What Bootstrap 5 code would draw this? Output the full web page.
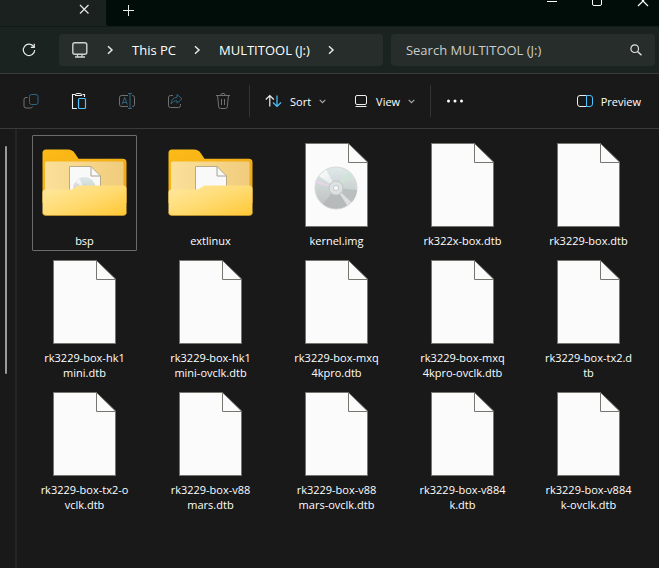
<!DOCTYPE html>
<html lang="en" data-bs-theme="dark">
<head>
<meta charset="utf-8">
<meta name="viewport" content="width=device-width, initial-scale=1">
<title>MULTITOOL (J:)</title>
<link href="https://cdn.jsdelivr.net/npm/bootstrap@5.3.0/dist/css/bootstrap.min.css" rel="stylesheet">
<style>
body { background: #191919; color: #fff; font-family: "Open Sans", "Noto Sans", sans-serif; font-size: 11px; line-height: 15px; }
svg { display: block; flex: none; }
.title-strip { background: #1a211e; height: 26px; }
.tab-current { width: 106px; padding-right: 13px; }
.strip-rest { background: #000d08; border-bottom-left-radius: 3px; }
.plain-btn { background: none; border: 0; color: inherit; padding: 0; display: flex; align-items: center; justify-content: center; }
.win-btn { width: 46px; }
.address-row { background: #1a231f; border-top: 1px solid #111a16; border-bottom: 1px solid #3a3b3a; padding: 7px 4px 7px 0; }
.refresh-btn { width: 59px; padding-right: 2px; }
.field-box { background: #262d2a; border-radius: 4px; height: 32px; font-size: 13px; }
.path-box { flex: 25 1 0; padding-left: 12px; }
.path-box a { color: #fff; }
.path-arrow { margin: 0 18px 0 17px; }
.find-box { flex: 19 1 0; padding: 0 12px 0 15px; }
.find-box input { background: none; border: 0; outline: 0; color: #fff; padding: 0; min-width: 0; }
.find-box input::placeholder { color: #c9cecb; opacity: 1; }
.command-bar { border-bottom: 1px solid #3a3a3a; height: 55px; padding: 0 18px 0 7px; }
.icon-btn { width: 48px; height: 32px; }
.icon-btn:disabled { opacity: .45; }
.rule { width: 1px; height: 32px; background: #333; margin-left: 2px; }
.menu-btn { padding: 0 13px 0 15px; height: 32px; }
.nav-edge { width: 17px; border-right: 2px solid #252525; padding: 17px 0 0 5px; }
.scroll-thumb { width: 2px; height: 228px; background: #9a9a9a; border-radius: 1px; }
.file-grid { display: grid; grid-template-columns: repeat(auto-fill, 105px); column-gap: 21px; row-gap: 1px; align-content: start; padding: 6px 0 16px 15px; }
.file-tile { border: 1px solid transparent; padding: 7px 0 2px; gap: 6px; white-space: nowrap; text-align: center; }
.file-tile.picked { border-color: #6b6b6b; border-radius: 1px; }
</style>
<script src="https://cdn.jsdelivr.net/npm/bootstrap@5.3.0/dist/js/bootstrap.bundle.min.js"></script>
</head>
<body class="d-flex flex-column min-vh-100">
<svg width="0" height="0" class="position-absolute" aria-hidden="true">
  <defs>
    <linearGradient id="gBack" x1="0" y1="0" x2="1" y2="1"><stop offset="0" stop-color="#fdbb16"/><stop offset="1" stop-color="#e9a51b"/></linearGradient>
    <linearGradient id="gInner" x1="0" y1="0" x2="1" y2="0"><stop offset="0" stop-color="#fbe09a"/><stop offset="1" stop-color="#f0cc7c"/></linearGradient>
    <linearGradient id="gFront" x1="0" y1="0" x2="1" y2="1"><stop offset="0" stop-color="#ffe8a0"/><stop offset=".5" stop-color="#ffdb72"/><stop offset="1" stop-color="#ffc734"/></linearGradient>
    <linearGradient id="gDisc" x1="0" y1="0" x2="0" y2="1"><stop offset="0" stop-color="#dfe9e9"/><stop offset=".5" stop-color="#ccd3d3"/><stop offset="1" stop-color="#bcbebe"/></linearGradient>
    <linearGradient id="gShine" x1="0" y1="0" x2="1" y2="1"><stop offset="0" stop-color="#fff" stop-opacity=".9"/><stop offset="1" stop-color="#fff" stop-opacity=".3"/></linearGradient>
  </defs>
  <symbol id="disc" viewBox="0 0 44 44">
    <circle cx="22" cy="22" r="21" fill="url(#gDisc)" stroke="#d5d8d8"/>
    <path d="M22 22 5 10 12 3.5z" fill="url(#gShine)"/>
    <path d="M22 22 1.500 14 0.800 17z" fill="#e6d6e8"/>
    <path d="M22 22 34.500 6 38 9.500z" fill="#cde5d6"/>
    <path d="M22 22 43 24A21 21 0 0 1 38 36z" fill="#bbbfbf"/>
    <path d="M22 22 37 36 33 39.500z" fill="#dedfdf"/>
    <path d="M22 22 9 38A21 21 0 0 0 33 39.500z" fill="#b7baba"/>
    <circle cx="22" cy="22" r="7" fill="#dde1e1" stroke="#c0c6c6"/>
    <circle cx="22" cy="22" r="2.500" fill="#fbfbfb" stroke="#c3c8c8"/>
  </symbol>
  <symbol id="file" viewBox="0 0 85 84">
    <path d="M11.500 .5H54.500L73.500 19V83.500H11.500z" fill="#fbfbfb" stroke="#77756f"/>
    <path d="M54.500 .5V19.500H73.500" fill="none" stroke="#77756f"/>
  </symbol>
  <symbol id="folderBack" viewBox="0 0 85 84">
    <path d="M.5 10a3.500 3.500 0 0 1 3.500-3.500H26c3 0 5 1 7 4l3.500 5.200H81a3.500 3.500 0 0 1 3.500 3.500V60H.5z" fill="url(#gBack)"/>
    <path d="M3 20a1.500 1.500 0 0 1 1.500-1.500h75.500a1.500 1.500 0 0 1 1.500 1.500V60H3z" fill="url(#gInner)"/>
    <path d="M27.500 23.500H49L58.500 33V60H27.500z" fill="#f9f9f9" stroke="#b9aa87"/>
    <path d="M49 23.500V33H58.500" fill="none" stroke="#a9a294"/>
  </symbol>
  <symbol id="folderFront" viewBox="0 0 85 84">
    <path d="M.5 49.500a3 3 0 0 1 3-3H27c3 0 4-.6 6-2s3.500-2 6-2H81a3.500 3.500 0 0 1 3.500 3.500V69a3.500 3.500 0 0 1-3.500 3.500H4A3.500 3.500 0 0 1 .5 69z" fill="url(#gFront)"/>
    <path d="M.5 69A3.500 3.500 0 0 0 4 72.500H81A3.500 3.500 0 0 0 84.500 69" fill="none" stroke="#c99a2b" stroke-opacity=".7"/>
  </symbol>
  <symbol id="chevR" viewBox="0 0 8 10"><path d="M2 1.200 6 5 2 8.800" fill="none" stroke="#e8e8e8" stroke-width="1.500"/></symbol>
  <symbol id="chevD" viewBox="0 0 7 5"><path d="M.7 .8 3.500 3.600 6.300 .8" fill="none" stroke="#aaa" stroke-width="1.200"/></symbol>
</svg>

<header>
  <div class="title-strip d-flex">
    <div class="tab-current d-flex justify-content-end">
      <button class="plain-btn pb-2" aria-label="Close tab"><svg width="18" height="18" viewBox="0 0 18 18"><path d="M5 5l8.500 8.500M13.500 5 5 13.500" stroke="#e8e8e8" stroke-width="1.200" fill="none"/></svg></button>
    </div>
    <div class="strip-rest flex-grow-1 d-flex justify-content-between">
      <button class="plain-btn win-btn pb-1" aria-label="New tab"><svg width="12" height="12" viewBox="0 0 12 12"><path d="M5.500 0v11M0 5.500h11" stroke="#e8e8e8" fill="none"/></svg></button>
      <div class="d-flex align-items-start">
        <button class="plain-btn win-btn" aria-label="Minimize"><svg width="12" height="8" viewBox="0 0 12 8"><path d="M1 1.500h10" stroke="#fff"/></svg></button>
        <button class="plain-btn win-btn" aria-label="Maximize"><svg width="12" height="8" viewBox="0 0 12 8"><path d="M.5 0v4a1.500 1.500 0 0 0 1.500 1.500h6A1.500 1.500 0 0 0 9.500 4V0" stroke="#fff" fill="none"/></svg></button>
        <button class="plain-btn ps-3 pe-2" aria-label="Close window"><svg width="14" height="8" viewBox="0 0 14 8"><path d="M1 6 7 0M11 6 5 0" stroke="#fff" stroke-width="1.200"/></svg></button>
      </div>
    </div>
  </div>

  <div class="address-row d-flex align-items-center">
    <button class="plain-btn refresh-btn" aria-label="Refresh"><svg width="14" height="14" viewBox="0 0 14 14"><path d="M11.800 3.800A5.700 5.700 0 1 0 12.700 7M12.300 .8v3.500H8.800" fill="none" stroke="#e8e8e8" stroke-width="1.200"/></svg></button>
    <nav class="field-box path-box d-flex align-items-center me-2" aria-label="Path">
      <svg width="18" height="18" viewBox="0 0 18 18"><rect x="1.800" y="1.800" width="14" height="11.500" rx="2" fill="#323936" stroke="#cfd2d1" stroke-width="1.400"/><path d="M6.500 13.500v2.500M11 13.500v2.500M4 16h10" stroke="#cfd2d1" stroke-width="1.300"/></svg>
      <svg class="path-arrow" width="8" height="10"><use href="#chevR"/></svg>
      <a href="#" class="text-decoration-none">This PC</a>
      <svg class="path-arrow" width="8" height="10"><use href="#chevR"/></svg>
      <a href="#" class="text-decoration-none">MULTITOOL (J:)</a>
      <svg class="path-arrow" width="8" height="10"><use href="#chevR"/></svg>
    </nav>
    <form class="field-box find-box d-flex align-items-center">
      <input type="text" class="flex-grow-1" placeholder="Search MULTITOOL (J:)" aria-label="Search MULTITOOL (J:)">
      <button type="button" class="plain-btn" aria-label="Search"><svg width="14" height="14" viewBox="0 0 14 14"><circle cx="5.700" cy="5.700" r="3.800" fill="none" stroke="#e0e0e0" stroke-width="1.200"/><path d="M8.500 8.500 12.500 12.300" stroke="#e0e0e0" stroke-width="1.400"/></svg></button>
    </form>
  </div>

  <div class="command-bar d-flex align-items-center">
    <button class="plain-btn icon-btn" disabled aria-label="Copy"><svg width="16" height="16" viewBox="0 0 16 16" fill="none"><rect x="6.500" y="1.500" width="8.500" height="10" rx="2" stroke="#4cc2ff"/><path d="M4.500 4.500H3a2 2 0 0 0-2 2V13a2 2 0 0 0 2 2H7.500a2 2 0 0 0 2-1.500" stroke="#ddd"/></svg></button>
    <button class="plain-btn icon-btn" aria-label="Paste"><svg width="16" height="18" viewBox="0 0 16 18" fill="none"><path d="M4 2.500H1.500v14H6M11.500 2.500H13.500V5" stroke="#eee" stroke-width="1.100"/><path d="M4.500 3.500C4.500 2 5 1.500 6 1.500h3c1 0 1.500.5 1.500 2z" stroke="#eee" stroke-width="1.100"/><rect x="7.500" y="6.500" width="7" height="10" rx="1" stroke="#4cc2ff" stroke-width="1.200"/></svg></button>
    <button class="plain-btn icon-btn" disabled aria-label="Rename"><svg width="18" height="18" viewBox="0 0 18 18" fill="none"><path d="M10 3.500H3.500a2 2 0 0 0-2 2v7a2 2 0 0 0 2 2H10M14 3.500h.5a2 2 0 0 1 2 2v7a2 2 0 0 1-2 2H14" stroke="#ddd"/><path d="M12 1.500v15M10 1.500h4M10 16.500h4M4 12.500 6.700 5.500 9.400 12.500M5 10.500H8.500" stroke="#4cc2ff"/></svg></button>
    <button class="plain-btn icon-btn" disabled aria-label="Share"><svg width="16" height="16" viewBox="0 0 16 16" fill="none"><path d="M6 2.500H3.500a2 2 0 0 0-2 2v8a2 2 0 0 0 2 2h8a2 2 0 0 0 2-2V11" stroke="#ddd"/><path d="M10 1.500 15 5.800 10 10.200V7.800C7.500 7.800 5.800 8.500 4 11c.3-4 2.500-6.500 6-6.800z" stroke="#4cc2ff" stroke-linejoin="round"/></svg></button>
    <button class="plain-btn icon-btn" disabled aria-label="Delete"><svg width="16" height="18" viewBox="0 0 16 18" fill="none" stroke="#ddd"><path d="M1 3.500h14M5.800 3.500a2.200 2.200 0 0 1 4.400 0M2.500 3.500 3.700 14.700a2 2 0 0 0 2 1.800h4.600a2 2 0 0 0 2-1.800L13.500 3.500M6.500 7v6M9.500 7v6"/></svg></button>
    <div class="rule"></div>
    <button class="plain-btn menu-btn"><svg class="me-2" width="17" height="14" viewBox="0 0 17 14" fill="none" stroke-width="1.200"><path d="M4.800 12.500V1.500M.8 5.500 4.800 1.500l4 4" stroke="#eee"/><path d="M12 1.500v11M8 8.500l4 4 4-4" stroke="#4cc2ff"/></svg><span class="me-2">Sort</span><svg width="7" height="5"><use href="#chevD"/></svg></button>
    <button class="plain-btn menu-btn"><svg class="me-2" width="14" height="14" viewBox="0 0 14 14" fill="none" stroke="#eee"><rect x="1.500" y="1.500" width="11" height="9" rx="1.500"/><path d="M1.500 12.500h11"/></svg><span class="me-2">View</span><svg width="7" height="5"><use href="#chevD"/></svg></button>
    <div class="rule"></div>
    <button class="plain-btn menu-btn" aria-label="See more"><svg width="18" height="4" viewBox="0 0 18 4" fill="#fff"><circle cx="2.500" cy="2" r="1.500"/><circle cx="9" cy="2" r="1.500"/><circle cx="15.500" cy="2" r="1.500"/></svg></button>
    <button class="plain-btn ms-auto"><svg class="me-2" width="16" height="14" viewBox="0 0 16 14" fill="none"><path d="M9.500 1.500H3a2.500 2.500 0 0 0-2.500 2.500v6A2.500 2.500 0 0 0 3 12.500H9.500" stroke="#eee"/><path d="M9.500 1.500H13A2.500 2.500 0 0 1 15.500 4v6a2.500 2.500 0 0 1-2.500 2.500H9.500z" stroke="#4cc2ff"/></svg>Preview</button>
  </div>
</header>

<main class="d-flex flex-grow-1">
  <div class="nav-edge"><div class="scroll-thumb"></div></div>
  <div class="file-grid flex-grow-1">
    <div class="file-tile picked d-flex flex-column align-items-center"><svg width="85" height="84" viewBox="0 0 85 84"><use href="#folderBack"/><use href="#disc" x="31" y="34" width="23" height="23"/><use href="#folderFront"/></svg><span>bsp</span></div>
    <div class="file-tile d-flex flex-column align-items-center"><svg width="85" height="84" viewBox="0 0 85 84"><use href="#folderBack"/><use href="#folderFront"/></svg><span>extlinux</span></div>
    <div class="file-tile d-flex flex-column align-items-center"><svg width="85" height="84" viewBox="0 0 85 84"><use href="#file"/><use href="#disc" x="20" y="23" width="44" height="44"/></svg><span>kernel.img</span></div>
    <div class="file-tile d-flex flex-column align-items-center"><svg width="85" height="84"><use href="#file"/></svg><span>rk322x-box.dtb</span></div>
    <div class="file-tile d-flex flex-column align-items-center"><svg width="85" height="84"><use href="#file"/></svg><span>rk3229-box.dtb</span></div>
    <div class="file-tile d-flex flex-column align-items-center"><svg width="85" height="84"><use href="#file"/></svg><span>rk3229-box-hk1<br>mini.dtb</span></div>
    <div class="file-tile d-flex flex-column align-items-center"><svg width="85" height="84"><use href="#file"/></svg><span>rk3229-box-hk1<br>mini-ovclk.dtb</span></div>
    <div class="file-tile d-flex flex-column align-items-center"><svg width="85" height="84"><use href="#file"/></svg><span>rk3229-box-mxq<br>4kpro.dtb</span></div>
    <div class="file-tile d-flex flex-column align-items-center"><svg width="85" height="84"><use href="#file"/></svg><span>rk3229-box-mxq<br>4kpro-ovclk.dtb</span></div>
    <div class="file-tile d-flex flex-column align-items-center"><svg width="85" height="84"><use href="#file"/></svg><span>rk3229-box-tx2.d<br>tb</span></div>
    <div class="file-tile d-flex flex-column align-items-center"><svg width="85" height="84"><use href="#file"/></svg><span>rk3229-box-tx2-o<br>vclk.dtb</span></div>
    <div class="file-tile d-flex flex-column align-items-center"><svg width="85" height="84"><use href="#file"/></svg><span>rk3229-box-v88<br>mars.dtb</span></div>
    <div class="file-tile d-flex flex-column align-items-center"><svg width="85" height="84"><use href="#file"/></svg><span>rk3229-box-v88<br>mars-ovclk.dtb</span></div>
    <div class="file-tile d-flex flex-column align-items-center"><svg width="85" height="84"><use href="#file"/></svg><span>rk3229-box-v884<br>k.dtb</span></div>
    <div class="file-tile d-flex flex-column align-items-center"><svg width="85" height="84"><use href="#file"/></svg><span>rk3229-box-v884<br>k-ovclk.dtb</span></div>
  </div>
</main>
</body>
</html>
